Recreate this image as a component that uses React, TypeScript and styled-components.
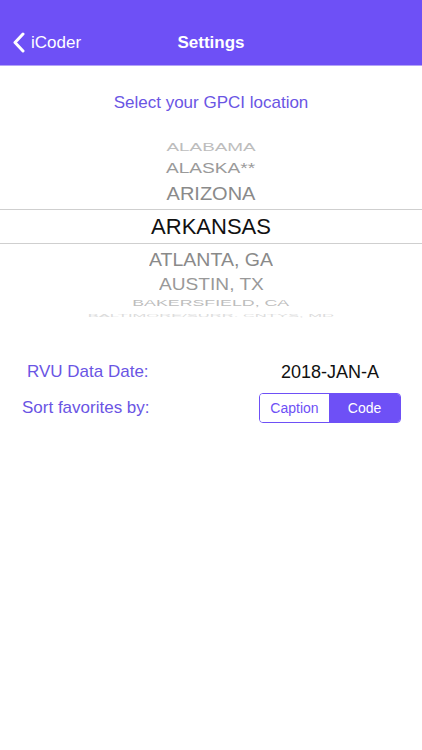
import React from 'react';
import styled, { createGlobalStyle } from 'styled-components';

const PURPLE = '#6e50f6';
const TEXT_PURPLE = '#6a55e4';

const GlobalStyle = createGlobalStyle`
  html, body {
    margin: 0;
    padding: 0;
    background: #ffffff;
    font-family: "Liberation Sans", Arial, sans-serif;
  }
`;

const Screen = styled.div`
  width: 422px;
  min-height: 750px;
  background: #ffffff;
  display: flex;
  flex-direction: column;
`;

const Header = styled.header`
  background-color: ${PURPLE};
  height: 66px;
  padding-top: 20px;
  box-sizing: border-box;
  border-bottom: 1px solid #b3a3f7;
`;

const NavBar = styled.nav`
  height: 45px;
  display: grid;
  grid-template-columns: 1fr auto 1fr;
  align-items: center;
  color: #ffffff;
`;

const BackButton = styled.div`
  display: flex;
  align-items: center;
  gap: 6px;
  padding-left: 12px;
  font-size: 17px;
`;

const Title = styled.h1`
  margin: 0;
  font-size: 17px;
  font-weight: 700;
`;

const Subtitle = styled.div`
  margin-top: 27px;
  line-height: 20px;
  text-align: center;
  font-size: 17px;
  color: ${TEXT_PURPLE};
`;

const Picker = styled.div`
  margin-top: 25px;
  display: flex;
  flex-direction: column;
`;

const PickerRow = styled.div<{ $h: number; $size: number; $sy: number; $sx: number; $color: string }>`
  height: ${({ $h }) => $h}px;
  display: flex;
  align-items: center;
  justify-content: center;
  overflow: visible;
  font-size: ${({ $size }) => $size}px;
  color: ${({ $color }) => $color};
  white-space: nowrap;

  span {
    display: inline-block;
    transform: scale(${({ $sx }) => $sx}, ${({ $sy }) => $sy});
  }
`;

const SelectedRow = styled.div`
  height: 35px;
  box-sizing: border-box;
  border-top: 1px solid #cfcfcf;
  border-bottom: 1px solid #cfcfcf;
  display: flex;
  align-items: center;
  justify-content: center;
  font-size: 22px;
  color: #111111;
`;

const SettingRow = styled.div<{ $left: number; $right: number; $top: number }>`
  display: flex;
  align-items: center;
  justify-content: space-between;
  height: 30px;
  margin-top: ${({ $top }) => $top}px;
  padding-left: ${({ $left }) => $left}px;
  padding-right: ${({ $right }) => $right}px;
`;

const Label = styled.span`
  font-size: 17px;
  color: ${TEXT_PURPLE};
`;

const Value = styled.span`
  font-size: 18px;
  color: #111111;
`;

const Segmented = styled.div`
  display: flex;
  height: 30px;
  box-sizing: border-box;
  border: 1px solid ${PURPLE};
  border-radius: 4px;
  overflow: hidden;
`;

const Segment = styled.div<{ $active?: boolean; $w: number }>`
  width: ${({ $w }) => $w}px;
  display: flex;
  align-items: center;
  justify-content: center;
  font-size: 14px;
  color: ${({ $active }) => ($active ? '#ffffff' : PURPLE)};
  background: ${({ $active }) => ($active ? PURPLE : '#ffffff')};
`;

const above = [
  { name: 'ALABAMA', h: 18, size: 19.5, sy: 0.52, sx: 0.97, color: '#bdbdbd' },
  { name: 'ALASKA**', h: 22, size: 19.5, sy: 0.78, sx: 0.98, color: '#9a9a9a' },
  { name: 'ARIZONA', h: 31, size: 20, sy: 0.95, sx: 1, color: '#8a8a8a' },
];

const below = [
  { name: 'ATLANTA, GA', h: 30, size: 19.5, sy: 0.98, sx: 1, color: '#8a8a8a' },
  { name: 'AUSTIN, TX', h: 21, size: 19.5, sy: 0.82, sx: 0.98, color: '#999999' },
  { name: 'BAKERSFIELD, CA', h: 16, size: 18.5, sy: 0.48, sx: 0.96, color: '#bdbdbd' },
  { name: 'BALTIMORE/SURR. CNTYS, MD', h: 8, size: 18, sy: 0.2, sx: 0.92, color: '#dcdcdc' },
];

export default function App() {
  return (
    <Screen>
      <GlobalStyle />
      <Header>
        <NavBar>
          <BackButton>
            <svg width="13" height="21" viewBox="0 0 13 21">
              <polyline points="11,2 3,10.5 11,19" fill="none" stroke="#ffffff" strokeWidth="3" strokeLinecap="round" strokeLinejoin="round" />
            </svg>
            iCoder
          </BackButton>
          <Title>Settings</Title>
          <div />
        </NavBar>
      </Header>

      <Subtitle>Select your GPCI location</Subtitle>

      <Picker>
        {above.map((r) => (
          <PickerRow key={r.name} $h={r.h} $size={r.size} $sy={r.sy} $sx={r.sx} $color={r.color}>
            <span>{r.name}</span>
          </PickerRow>
        ))}
        <SelectedRow>ARKANSAS</SelectedRow>
        {below.map((r) => (
          <PickerRow key={r.name} $h={r.h} $size={r.size} $sy={r.sy} $sx={r.sx} $color={r.color}>
            <span>{r.name}</span>
          </PickerRow>
        ))}
      </Picker>

      <SettingRow $left={27} $right={43} $top={38}>
        <Label>RVU Data Date:</Label>
        <Value>2018-JAN-A</Value>
      </SettingRow>
      <SettingRow $left={22} $right={21} $top={6}>
        <Label>Sort favorites by:</Label>
        <Segmented>
          <Segment $w={69}>Caption</Segment>
          <Segment $w={71} $active>Code</Segment>
        </Segmented>
      </SettingRow>
    </Screen>
  );
}
